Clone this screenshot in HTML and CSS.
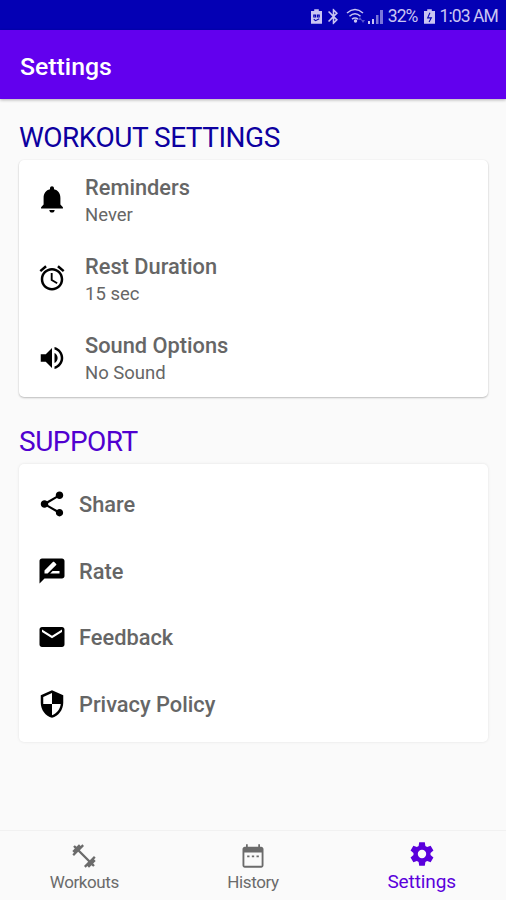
FILE: index.html
```html
<!DOCTYPE html>
<html lang="en">
<head>
  <meta charset="UTF-8">
  <meta name="viewport" content="width=device-width, initial-scale=1.0">
  <title>Settings</title>
  <link rel="stylesheet" href="styles.css">
</head>
<body>
  <div class="status-bar">
    <svg class="status-battery" viewBox="0 0 12 16"><path d="M3.500 0h5v2H12v14H0V2h3.500z"/><path class="status-cut" d="M3 6.500h2v2H3zM7 6.500h2v2H7zM3 11l2 1.500 4-2"/></svg>
    <svg class="status-bluetooth" viewBox="5 2 14 20"><path d="M17.710 7.710L12 2h-1v7.590L6.410 5 5 6.410 10.590 12 5 17.590 6.410 19 11 14.410V22h1l5.710-5.710-4.300-4.290 4.300-4.290zM13 5.830l1.880 1.880L13 9.590V5.830zm1.880 10.460L13 18.170v-3.760l1.880 1.880z"/></svg>
    <svg class="status-wifi" viewBox="0 0 20 16"><path class="line" d="M1 5q8-7 16 0M3.500 8.200q5.500-5 11 0M6 11.200q3-2.500 6 0"/><circle cx="9.500" cy="13" r="1.700"/><path class="dim" d="M14 9l2 3h-4zM17 15l-2-3h4z"/></svg>
    <svg class="status-signal" viewBox="0 0 16 15"><path d="M0 12h2v3H0zM4 10h2v5H4z"/><path class="half" d="M8 6h2.500v9H8zM12 1h3v14h-3z"/></svg>
    <span class="status-percent">32%</span>
    <svg class="status-battery" viewBox="0 0 12 16"><path d="M3.500 0h5v2H12v14H0V2h3.500z"/><path class="status-cut" d="M6.500 4L4 9.500h4L5.500 14"/></svg>
    <span class="status-time">1:03 AM</span>
  </div>

  <header class="app-bar">
    <h1>Settings</h1>
  </header>

  <main class="content">
    <h2 class="section-title">WORKOUT SETTINGS</h2>
    <section class="card card-workout">
      <div class="item">
        <svg class="icon icon-bell" viewBox="0 0 24 24"><path d="M12 22.200c1.100 0 2-.9 2-2h-4c0 1.100.89 2 2 2zm6.300-6v-5c0-3.270-1.740-5.740-4.800-6.420V4c0-.83-.67-1.500-1.500-1.500s-1.500.67-1.500 1.500v.78C7.430 5.460 5.700 7.930 5.700 11.200v5L3.800 18.200v1h16.400v-1z"/></svg>
        <div class="item-text">
          <h3>Reminders</h3>
          <p>Never</p>
        </div>
      </div>
      <div class="item">
        <svg class="icon icon-alarm" viewBox="0 0 24 24"><path d="M22 5.720l-4.600-3.860-1.290 1.530 4.600 3.860L22 5.720zM7.880 3.390L6.600 1.860 2 5.710l1.290 1.530 4.590-3.850zM12.500 8H11v6l4.750 2.850.75-1.230-4-2.370V8zM12 4c-4.970 0-9 4.030-9 9s4.020 9 9 9c4.970 0 9-4.030 9-9s-4.030-9-9-9zm0 16c-3.870 0-7-3.130-7-7s3.130-7 7-7 7 3.130 7 7-3.130 7-7 7z"/></svg>
        <div class="item-text">
          <h3>Rest Duration</h3>
          <p>15 sec</p>
        </div>
      </div>
      <div class="item">
        <svg class="icon" viewBox="0 0 24 24"><path d="M3 9v6h4l5 5V4L7 9H3zm13.500 3c0-1.770-1.020-3.290-2.500-4.030v8.050c1.480-.73 2.500-2.250 2.500-4.020zM14 3.230v2.060c2.890.86 5 3.540 5 6.710s-2.110 5.850-5 6.710v2.060c4.010-.91 7-4.490 7-8.770s-2.990-7.860-7-8.770z"/></svg>
        <div class="item-text">
          <h3>Sound Options</h3>
          <p>No Sound</p>
        </div>
      </div>
    </section>

    <h2 class="section-title section-title-support">SUPPORT</h2>
    <section class="card card-support">
      <div class="item">
        <svg class="icon" viewBox="0 0 24 24"><path d="M18 16.080c-.76 0-1.440.3-1.960.77L8.910 12.700c.05-.23.09-.46.09-.7s-.04-.47-.09-.7l7.050-4.110c.54.5 1.250.81 2.040.81 1.660 0 3-1.340 3-3s-1.340-3-3-3-3 1.340-3 3c0 .24.04.47.09.7L8.040 9.810C7.500 9.310 6.790 9 6 9c-1.660 0-3 1.340-3 3s1.340 3 3 3c.79 0 1.500-.31 2.040-.81l7.120 4.160c-.05.21-.08.43-.08.65 0 1.610 1.310 2.920 2.920 2.920s2.920-1.310 2.920-2.920-1.310-2.920-2.920-2.920z"/></svg>
        <h3>Share</h3>
      </div>
      <div class="item">
        <svg class="icon" viewBox="0 0 24 24"><path d="M20 2H4c-1.100 0-1.990.9-1.990 2L2 22l4-4h14c1.100 0 2-.9 2-2V4c0-1.100-.9-2-2-2zM6 14v-2.470l6.880-6.880c.2-.2.51-.2.71 0l1.770 1.770c.2.2.2.51 0 .71L8.470 14H6zm12 0h-7.500l2-2H18v2z"/></svg>
        <h3>Rate</h3>
      </div>
      <div class="item">
        <svg class="icon" viewBox="0 0 24 24"><path d="M20 4H4c-1.100 0-1.990.9-1.990 2L2 18c0 1.100.9 2 2 2h16c1.100 0 2-.9 2-2V6c0-1.100-.9-2-2-2zm0 4l-8 5-8-5V6l8 5 8-5v2z"/></svg>
        <h3>Feedback</h3>
      </div>
      <div class="item">
        <svg class="icon" viewBox="0 0 24 24"><path d="M12 1L3 5v6c0 5.550 3.840 10.740 9 12 5.160-1.260 9-6.450 9-12V5l-9-4zm0 10.990h7c-.53 4.120-3.280 7.790-7 8.940V12H5V6.300l7-3.110v8.800z"/></svg>
        <h3>Privacy Policy</h3>
      </div>
    </section>
  </main>

  <nav class="bottom-nav">
    <a class="nav-item">
      <svg viewBox="0 0 24 24"><path d="M20.570 14.860L22 13.430 20.570 12 17 15.570 8.430 7 12 3.430 10.570 2 9.140 3.430 7.710 2 5.570 4.140 4.140 2.710 2.710 4.140l1.430 1.430L2 7.710l1.430 1.430L2 10.570 3.430 12 7 8.430 15.570 17 12 20.570 13.430 22l1.430-1.430L16.290 22l2.140-2.140 1.430 1.430 1.430-1.430-1.430-1.430L22 16.290z"/></svg>
      <span>Workouts</span>
    </a>
    <a class="nav-item">
      <svg viewBox="0 0 24 24"><path d="M9 11.500H7V13h2v-1.500zm4 0h-2V13h2v-1.500zm4 0h-2V13h2v-1.500zM19 4h-1V2h-1.500v2h-9V2H6v2H5c-1.110 0-1.990.9-1.990 2L3 20c0 1.100.89 2 2 2h14c1.100 0 2-.9 2-2V6c0-1.100-.9-2-2-2zm.4 16.400H4.600V9h14.800v11.400z"/></svg>
      <span>History</span>
    </a>
    <a class="nav-item active">
      <svg viewBox="0 0 24 24"><path d="M9.600 2h4.800l.5 3.200 1.500.9 3-1.200 2.400 4.200-2.500 2v1.800l2.500 2-2.400 4.200-3-1.200-1.500.9-.5 3.200H9.600l-.5-3.200-1.500-.9-3 1.200-2.400-4.200 2.500-2v-1.800l-2.500-2 2.400-4.200 3 1.200 1.500-.9zM12 8.400a3.600 3.600 0 1 0 0 7.200 3.600 3.600 0 0 0 0-7.200z"/></svg>
      <span>Settings</span>
    </a>
  </nav>
</body>
</html>
```
FILE: styles.css
```css
* { margin: 0; padding: 0; box-sizing: border-box; }
body {
  font-family: Roboto, sans-serif;
  background: #fafafa;
  height: 100vh;
  display: flex;
  flex-direction: column;
  overflow: hidden;
  color: #666;
}
.status-bar {
  height: 30px;
  padding: 2px 8px 0 0;
  display: flex;
  justify-content: flex-end;
  align-items: center;
  background: #0400b4;
  color: #c9c5f2;
  font-size: 17.5px;
  letter-spacing: -0.9px;
  white-space: nowrap;
}
.status-bar svg {
  fill: currentColor;
}
.status-bar .status-cut {
  fill: none;
  stroke: #0400b4;
  stroke-width: 1.2;
}
.status-battery { width: 11px; height: 15px; }
.status-bluetooth { width: 11px; height: 17px; margin-left: 6px; }
.status-wifi { width: 20px; height: 16px; margin-left: 7px; }
.status-wifi .line { fill: none; stroke: currentColor; stroke-width: 1.5; }
.status-wifi .dim { opacity: 0.4; }
.status-signal { width: 16px; height: 15px; margin-left: 2px; }
.status-signal .half { opacity: 0.6; }
.status-percent { margin: 0 6px 0 4px; }
.status-time { margin-left: 5px; }
.app-bar {
  height: 69px;
  padding: 3px 20px 0;
  display: flex;
  align-items: center;
  background: #6200ee;
  color: #fff;
  box-shadow: 0 1px 3px rgba(0, 0, 0, 0.3);
}
.app-bar h1 {
  font-size: 24.8px;
  font-weight: 500;
}
.content {
  flex: 1;
  padding: 21px 18px 0 19px;
}
.section-title {
  height: 40px;
  line-height: 35px;
  font-size: 28px;
  font-weight: 400;
  letter-spacing: -0.5px;
  color: #0d00a0;
}
.section-title-support {
  margin-top: 27px;
  line-height: 36px;
  color: #5000d0;
}
.card {
  background: #fff;
  border-radius: 5px;
  box-shadow: 0 1px 2px rgba(0, 0, 0, 0.24), 0 0 2px rgba(0, 0, 0, 0.06);
}
.card-workout { height: 237px; }
.card-support {
  height: 278px;
  padding-top: 7px;
  box-shadow: 0 0 3px rgba(0, 0, 0, 0.1);
}
.item {
  display: flex;
  align-items: center;
  padding-left: 18px;
}
.item h3 {
  padding-top: 2px;
  font-size: 21.8px;
  line-height: 28px;
  font-weight: 500;
}
.item p {
  font-size: 18.5px;
  line-height: 26px;
}
.card-workout .item {
  height: 79.2px;
  gap: 18px;
}
.card-support .item {
  height: 66.6px;
  gap: 12px;
}
.icon {
  width: 30px;
  height: 30px;
  fill: #000;
}
.icon-bell {
  width: 32px;
  height: 32px;
  margin: -2px -1px 0;
}
.icon-alarm {
  margin-top: -2px;
}
.bottom-nav {
  height: 70px;
  display: flex;
  border-top: 1px solid #f1f1f1;
}
.nav-item {
  flex: 1;
  display: flex;
  flex-direction: column;
  align-items: center;
  padding-top: 11px;
  font-size: 17px;
  line-height: 25px;
  letter-spacing: -0.4px;
  color: #6b6b6b;
}
.nav-item svg {
  width: 28px;
  height: 28px;
  fill: currentColor;
}
.nav-item.active {
  padding-top: 9px;
  font-size: 19px;
  line-height: 28px;
  letter-spacing: -0.1px;
  color: #5a00dc;
}
```
